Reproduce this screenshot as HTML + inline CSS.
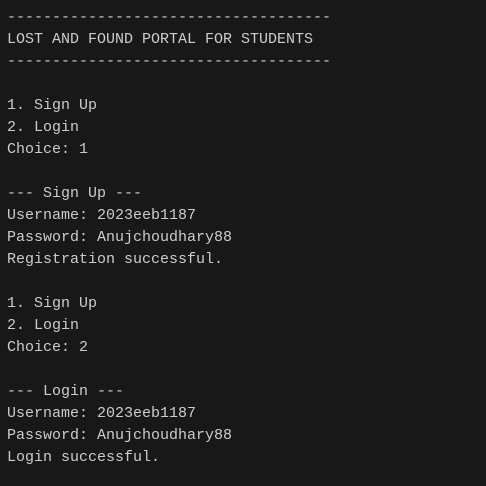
<!DOCTYPE html>
<html><head><style>
html,body{margin:0;padding:0;background:#181818;width:486px;height:486px;overflow:hidden}
pre{margin:0;padding:7px 0 0 7px;font-family:"Liberation Mono",monospace;font-size:15px;line-height:22px;color:#cccccc}
</style></head><body><pre>------------------------------------
LOST AND FOUND PORTAL FOR STUDENTS
------------------------------------

1. Sign Up
2. Login
Choice: 1

--- Sign Up ---
Username: 2023eeb1187
Password: Anujchoudhary88
Registration successful.

1. Sign Up
2. Login
Choice: 2

--- Login ---
Username: 2023eeb1187
Password: Anujchoudhary88
Login successful.</pre></body></html>
